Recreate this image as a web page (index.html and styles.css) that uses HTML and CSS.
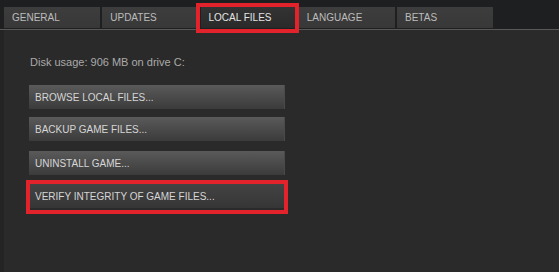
FILE: index.html
```html
<!DOCTYPE html>
<html lang="en">
<head>
    <meta charset="UTF-8">
    <meta name="viewport" content="width=device-width, initial-scale=1.0">
    <title>Properties - Local Files</title>
    <link rel="stylesheet" href="styles.css">
</head>
<body>
    <div class="window">
        <div class="tabs">
            <div class="tab">GENERAL</div>
            <div class="tab">UPDATES</div>
            <div class="tab active marked">LOCAL FILES</div>
            <div class="tab">LANGUAGE</div>
            <div class="tab">BETAS</div>
        </div>

        <div class="panel">
            <p class="disk">Disk usage: 906 MB on drive C:</p>

            <div class="actions">
                <button class="action">BROWSE LOCAL FILES...</button>
                <button class="action">BACKUP GAME FILES...</button>
                <button class="action spaced">UNINSTALL GAME...</button>
                <button class="action verify marked">VERIFY INTEGRITY OF GAME FILES...</button>
            </div>
        </div>
    </div>
</body>
</html>
```

FILE: styles.css
```css
* {
    margin: 0;
    padding: 0;
    box-sizing: border-box;
    font-family: 'Liberation Sans', Arial, sans-serif;
}

body {
    background-color: #242424;
    width: 559px;
    height: 272px;
    overflow: hidden;
}

.window {
    display: flex;
    flex-direction: column;
    height: 100%;
}

/* tab strip */
.tabs {
    display: flex;
    align-items: flex-end;
    height: 30px;
    padding: 0 0 1px 4px;
    background-color: #1e1f20;
    border-bottom: 1px solid #585858;
}

.tab {
    position: relative;
    width: 96px;
    height: 21px;
    margin-right: 2.25px;
    padding: 0 8px;
    display: flex;
    align-items: center;
    background: linear-gradient(to bottom, #3d3d3d, #383838);
    color: #bcbcbc;
    font-size: 10px;
    white-space: nowrap;
}

.tab.active {
    background: linear-gradient(to bottom, #333333, #2a2a2a);
    color: #e4e4e4;
}

/* red highlight boxes */
.marked::after {
    content: '';
    position: absolute;
    border: 4px solid #e2232b;
    pointer-events: none;
}

.tab.marked::after {
    top: -4px;
    bottom: -5px;
    left: -5px;
    right: -2px;
}

/* content */
.panel {
    flex: 1;
    margin-left: 4px;
    padding: 26px 0 0 25px;
    background-color: #2a2a2a;
}

.disk {
    padding-left: 1px;
    color: #ababab;
    font-size: 11px;
    line-height: 13px;
}

.actions {
    display: flex;
    flex-direction: column;
    align-items: flex-start;
    gap: 8px;
    margin-top: 16px;
}

.action {
    position: relative;
    width: 256px;
    height: 24px;
    padding: 0 6px;
    border: none;
    border-right: 1px solid #4a4a4a;
    background: linear-gradient(to bottom, #5a5a5a, #3b3b3b);
    color: #d6d6d6;
    font-size: 10px;
    text-align: left;
    cursor: pointer;
}

.action.spaced {
    margin-top: 2px;
}

.action.verify {
    margin-top: 1px;
    background: linear-gradient(to bottom, #434343, #363636);
}

.action.marked::after {
    top: -4px;
    bottom: -6px;
    left: -3px;
    right: -4px;
}
```
